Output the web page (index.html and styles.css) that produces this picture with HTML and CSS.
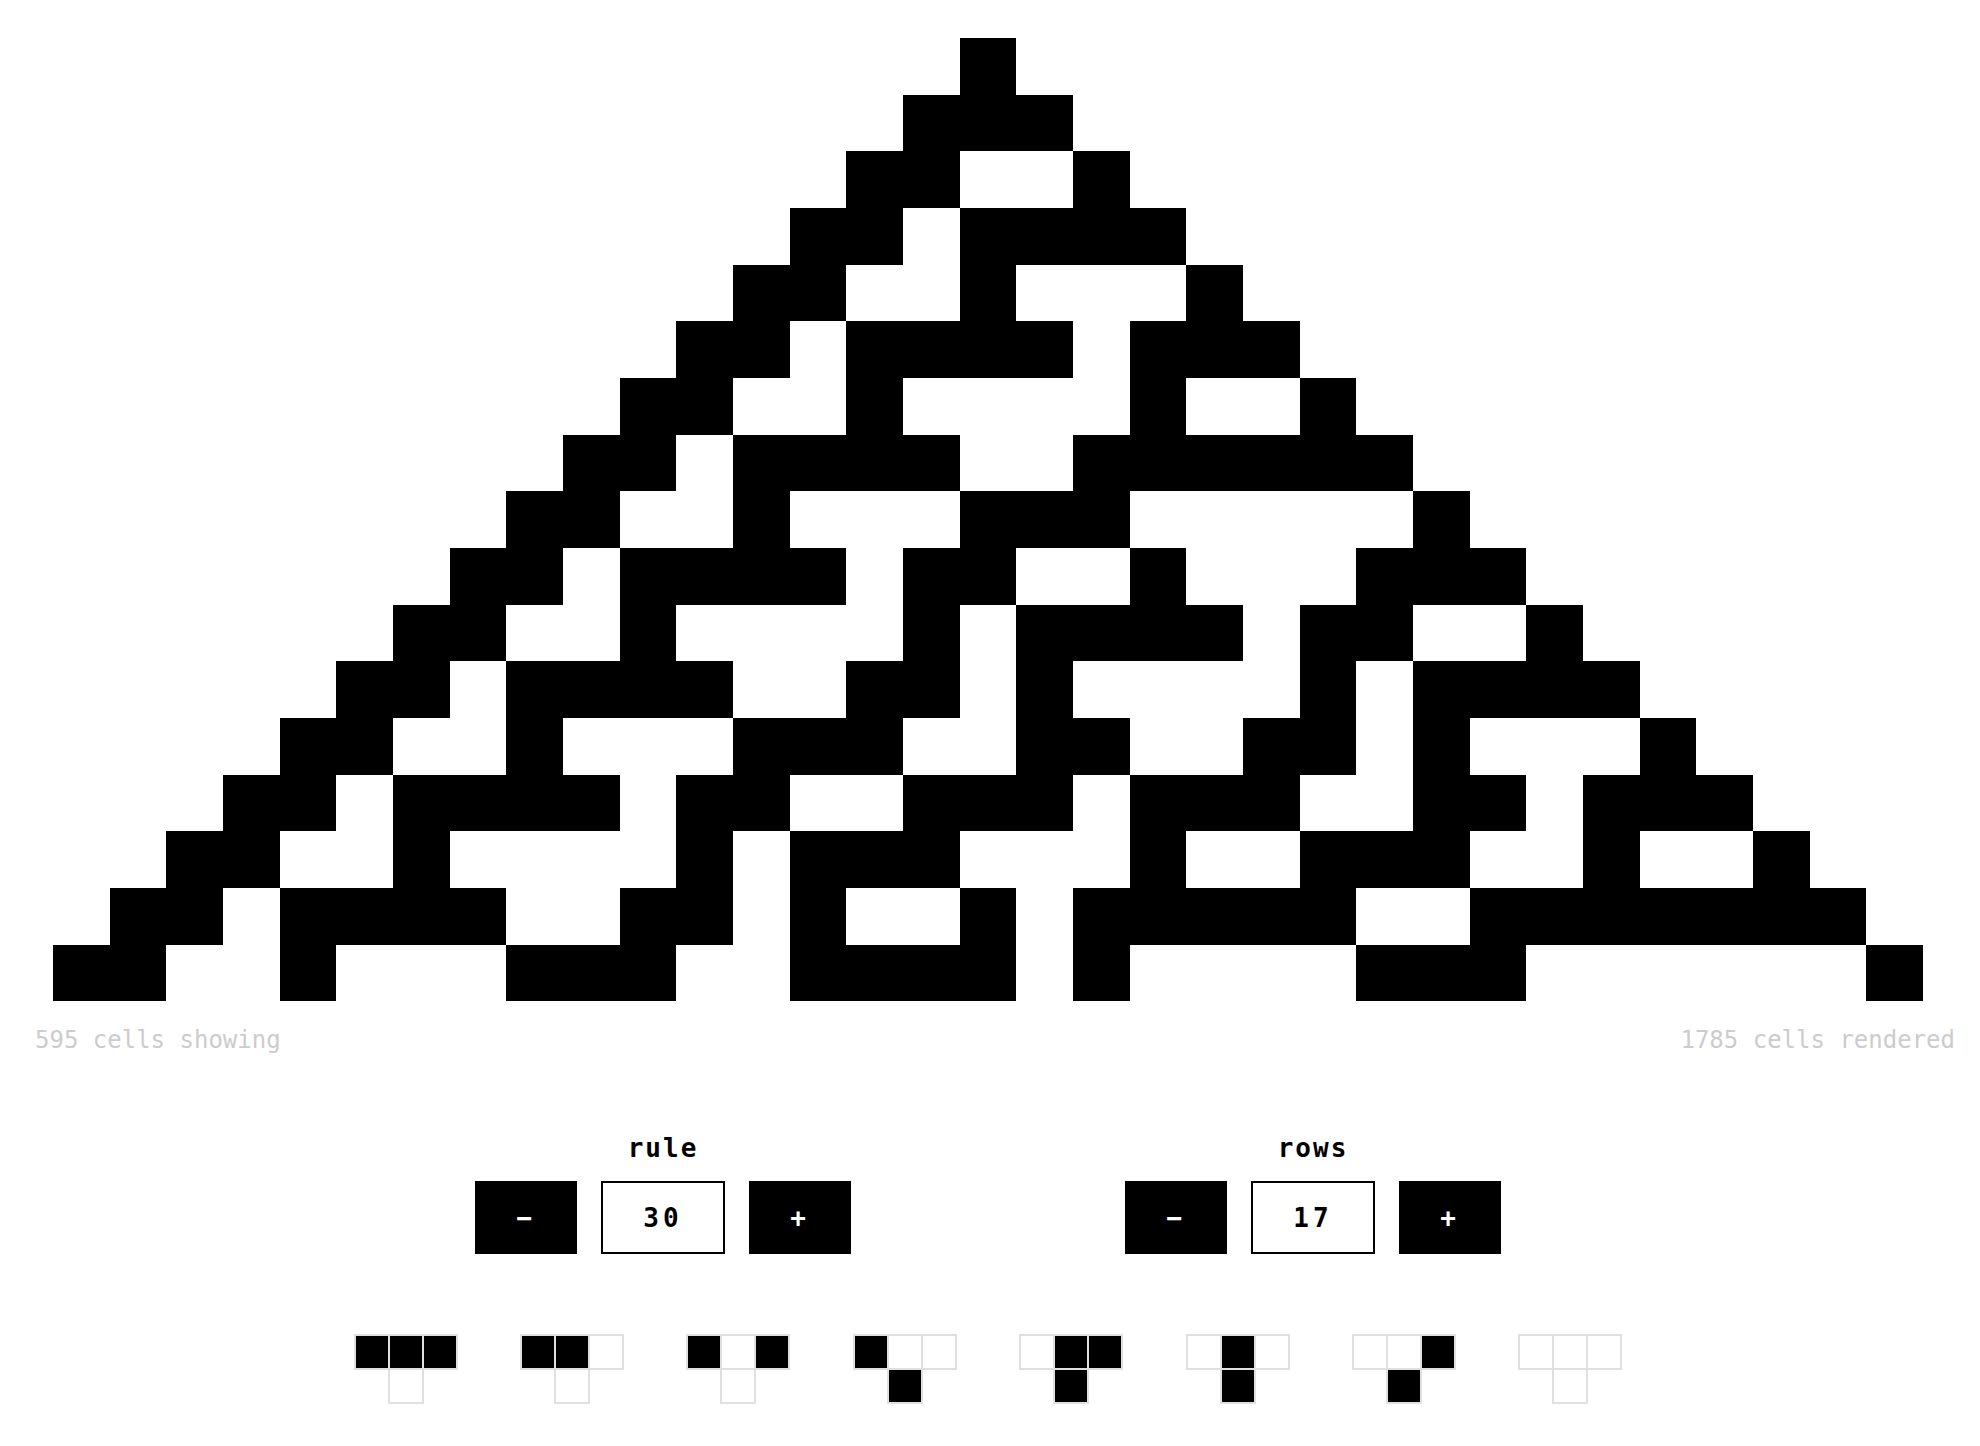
FILE: index.html
```html
<!DOCTYPE html>
<html lang="en">
<head>
  <meta charset="UTF-8" />
  <title>Rule 30 - Elementary Cellular Automaton</title>
  <meta name="viewport" content="width=device-width, initial-scale=1.0" />
  <link rel="stylesheet" href="styles.css">
</head>
<body>

  <div class="app">
    <div class="viewport">
      <div class="grid" id="grid"></div>
    </div>

    <div class="stats">
      <span id="showing">595 cells showing</span>
      <span id="rendered">1785 cells rendered</span>
    </div>

    <div class="controls">
      <div class="control">
        <div class="control-label">rule</div>
        <div class="control-row">
          <button class="step" data-target="rule" data-step="-1">&minus;</button>
          <input class="value" id="rule" type="text" value="30" />
          <button class="step" data-target="rule" data-step="1">+</button>
        </div>
      </div>
      <div class="control">
        <div class="control-label">rows</div>
        <div class="control-row">
          <button class="step" data-target="rows" data-step="-1">&minus;</button>
          <input class="value" id="rows" type="text" value="17" />
          <button class="step" data-target="rows" data-step="1">+</button>
        </div>
      </div>
    </div>

    <div class="rules" id="rules"></div>
  </div>

  <script>
    const SHOWN = 35;
    const COLS = SHOWN * 3;
    const state = { rule: 30, rows: 17 };

    const grid = document.getElementById("grid");
    const rulesBox = document.getElementById("rules");

    function generate(rule, rows) {
      let row = new Array(COLS).fill(0);
      row[Math.floor(COLS / 2)] = 1;
      const out = [row];
      for (let r = 1; r < rows; r++) {
        const prev = out[r - 1];
        const next = prev.map((c, i) => {
          const l = prev[i - 1] || 0;
          const rt = prev[i + 1] || 0;
          return (rule >> (l * 4 + c * 2 + rt)) & 1;
        });
        out.push(next);
      }
      return out;
    }

    function cell(on, cls) {
      const div = document.createElement("div");
      div.className = cls + (on ? " on" : "");
      return div;
    }

    function render() {
      const frag = document.createDocumentFragment();
      generate(state.rule, state.rows).forEach(row => {
        row.forEach(c => frag.appendChild(cell(c, "cell")));
      });
      grid.innerHTML = "";
      grid.appendChild(frag);

      document.getElementById("showing").textContent = (state.rows * SHOWN) + " cells showing";
      document.getElementById("rendered").textContent = (state.rows * COLS) + " cells rendered";
      document.getElementById("rule").value = state.rule;
      document.getElementById("rows").value = state.rows;

      rulesBox.innerHTML = "";
      for (let n = 7; n >= 0; n--) {
        const pattern = document.createElement("div");
        pattern.className = "pattern";
        const top = document.createElement("div");
        top.className = "pattern-top";
        [4, 2, 1].forEach(bit => top.appendChild(cell(n & bit, "pcell")));
        pattern.appendChild(top);
        pattern.appendChild(cell((state.rule >> n) & 1, "pcell result"));
        rulesBox.appendChild(pattern);
      }
    }

    document.querySelectorAll(".step").forEach(btn => {
      btn.addEventListener("click", () => {
        const key = btn.dataset.target;
        const max = key === "rule" ? 255 : 60;
        const min = key === "rule" ? 0 : 1;
        state[key] = Math.min(max, Math.max(min, state[key] + Number(btn.dataset.step)));
        render();
      });
    });

    ["rule", "rows"].forEach(key => {
      document.getElementById(key).addEventListener("change", e => {
        const v = parseInt(e.target.value, 10);
        if (!isNaN(v)) state[key] = v;
        render();
      });
    });

    render();
  </script>

</body>
</html>
```

FILE: styles.css
```css
* {
  box-sizing: border-box;
  margin: 0;
  padding: 0;
}

body {
  font-family: "DejaVu Sans Mono", "Liberation Mono", monospace;
  background: #ffffff;
  color: #000;
}

.app {
  width: 1976px;
  padding-top: 38px;
}

/* automaton */
.viewport {
  overflow: hidden;
  display: flex;
  justify-content: center;
}

.grid {
  flex: none;
  display: grid;
  grid-template-columns: repeat(105, 56.66px);
  grid-auto-rows: 56.66px;
}

.cell.on {
  background: #000;
}

.stats {
  display: flex;
  justify-content: space-between;
  margin-top: 25px;
  padding: 0 21px 0 35px;
  font-size: 24px;
  line-height: 28px;
  color: #cccccc;
}

/* controls */
.controls {
  display: flex;
  justify-content: center;
  gap: 274px;
  margin-top: 79px;
}

.control {
  display: flex;
  flex-direction: column;
  align-items: center;
  gap: 18px;
}

.control-label {
  font-size: 26px;
  line-height: 30px;
  font-weight: bold;
  letter-spacing: 2px;
}

.control-row {
  display: flex;
  gap: 24px;
}

.step,
.value {
  height: 73px;
  font-family: inherit;
  font-size: 26px;
  font-weight: bold;
  letter-spacing: 4px;
  outline: none;
}

.step {
  width: 102px;
  background: #000;
  color: #fff;
  border: none;
  cursor: pointer;
}

.value {
  width: 124px;
  border: 2px solid #000;
  background: #fff;
  color: #000;
  text-align: center;
}

/* rule table */
.rules {
  display: flex;
  justify-content: center;
  gap: 62.4px;
  margin-top: 80px;
}

.pattern {
  width: 104px;
  display: flex;
  flex-direction: column;
}

.pattern-top {
  display: flex;
}

.pcell {
  width: 36px;
  height: 36px;
  border: 2px solid #e0e0e0;
  background: #fff;
}

.pattern-top .pcell + .pcell {
  margin-left: -2px;
}

.pcell.on {
  background: #000;
}

.pcell.result {
  margin: -2px auto 0;
}
```
